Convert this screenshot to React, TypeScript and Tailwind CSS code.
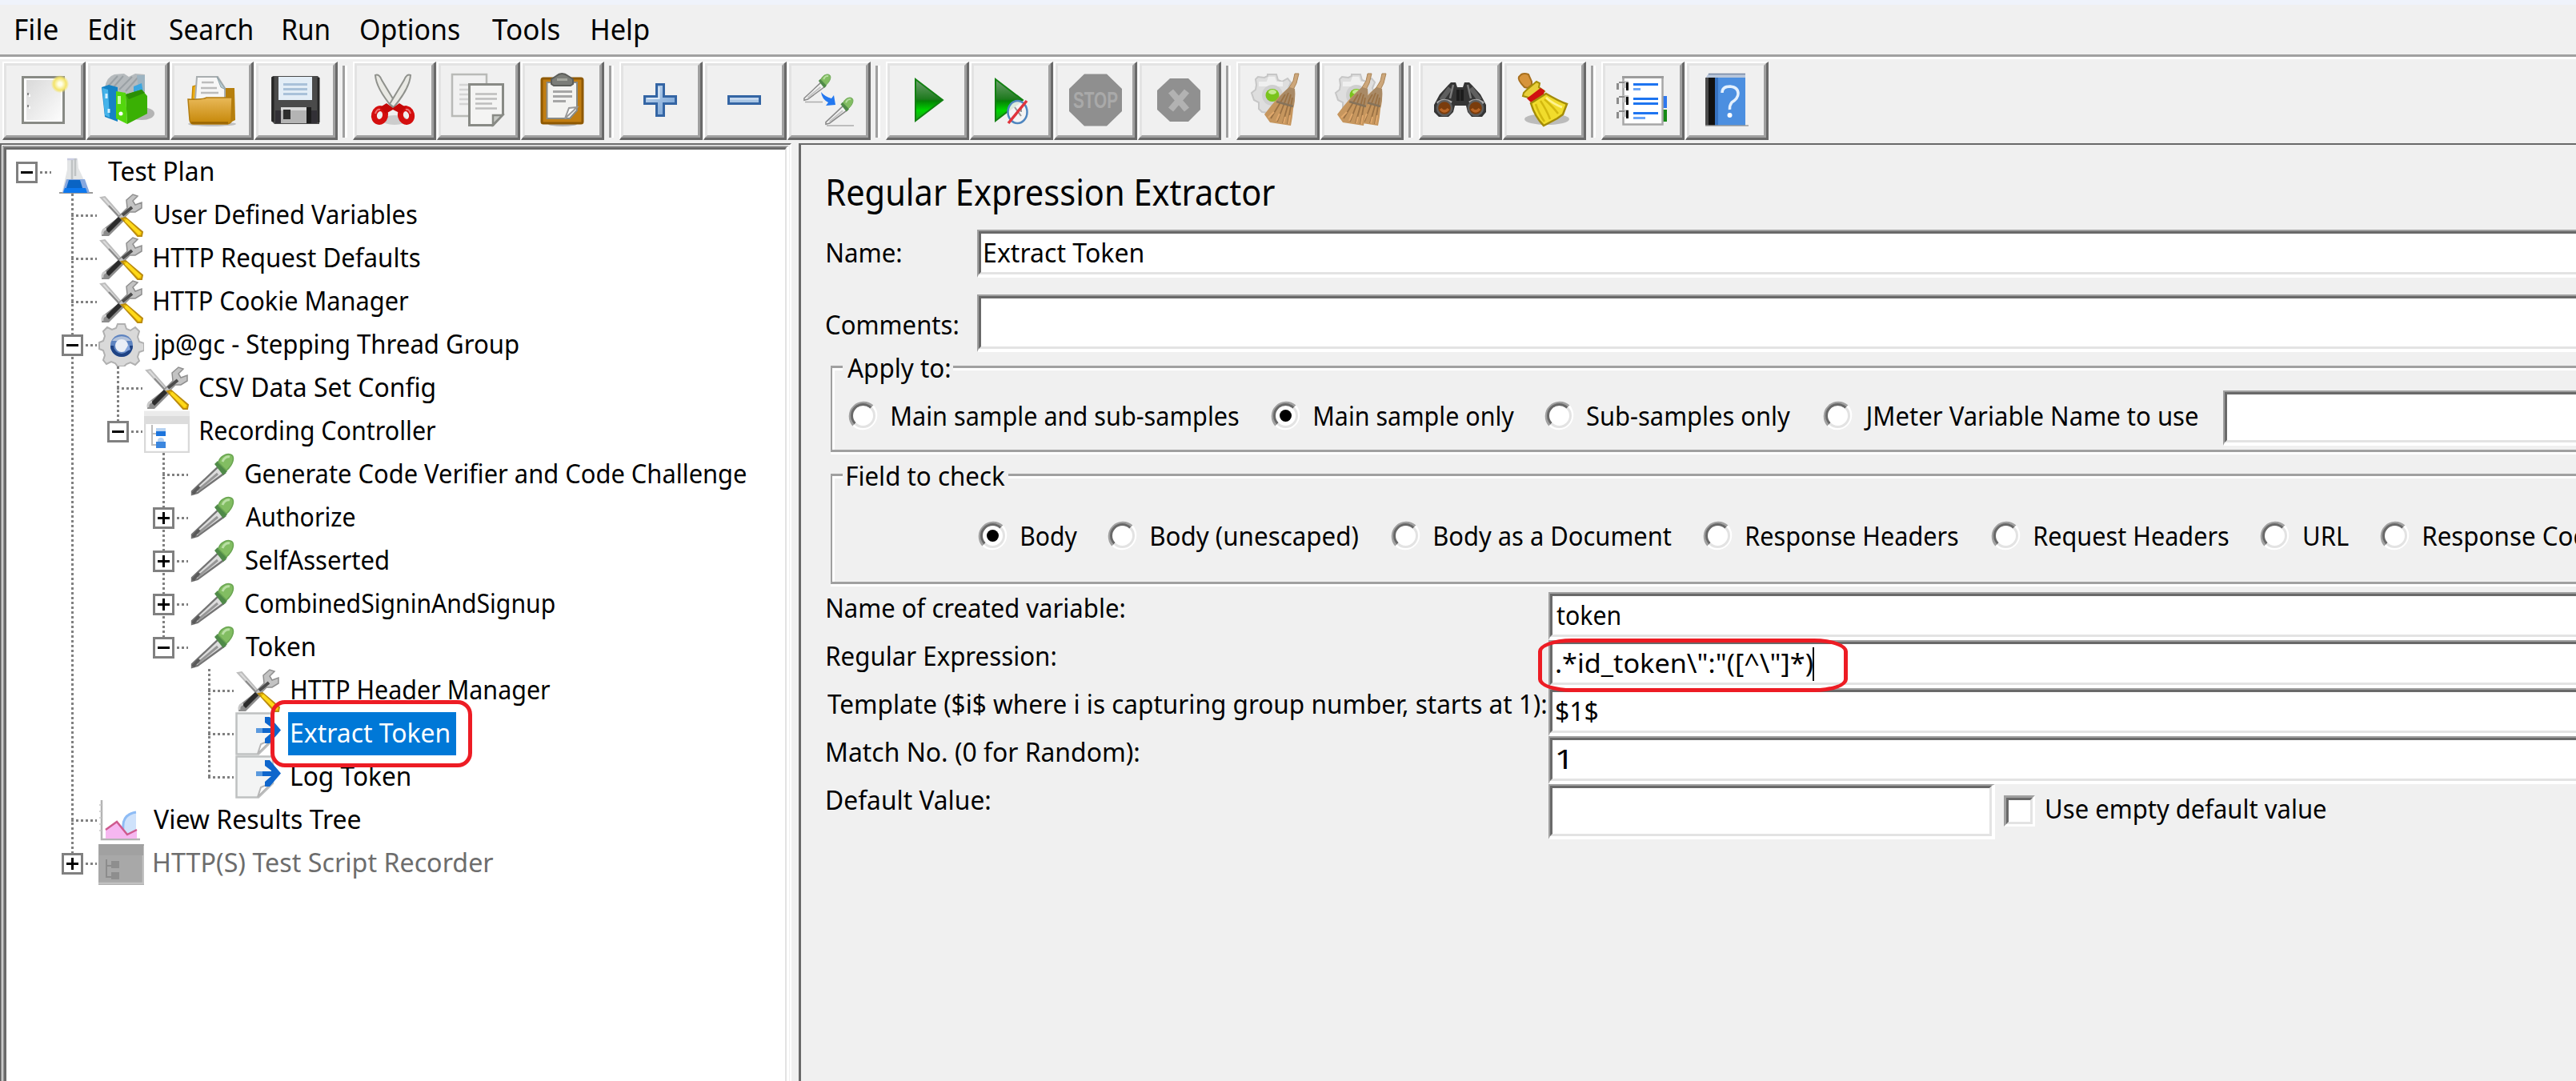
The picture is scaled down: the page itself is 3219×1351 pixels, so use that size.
import { useLayoutEffect, useState, type ReactNode } from "react";

const FAMILY = '"Noto Sans", "Open Sans", sans-serif';

/* One line of text whose inked glyphs fill exactly `w` pixels. */
function Fit({ t, w, size = 33, className = "" }: { t: string; w: number; size?: number; className?: string }) {
  const [m, setM] = useState({ s: 1, x: 0 });
  useLayoutEffect(() => {
    const ctx = document.createElement("canvas").getContext("2d");
    if (!ctx) return;
    ctx.font = `${size}px ${FAMILY}`;
    const b = ctx.measureText(t);
    const s = w / (b.actualBoundingBoxLeft + b.actualBoundingBoxRight);
    setM({ s, x: b.actualBoundingBoxLeft * s });
  }, [t, w, size]);
  return (
    <span className={`block shrink-0 whitespace-pre ${className}`} style={{ width: w, fontSize: size }}>
      <span className="inline-block origin-left" style={{ transform: `translateX(${m.x}px) scaleX(${m.s})` }}>
        {t}
      </span>
    </span>
  );
}

/* ---------- toolbar icons (66 x 66) ---------- */

function Dropper({ x = 0, y = 0, k = 1, dark = false }: { x?: number; y?: number; k?: number; dark?: boolean }) {
  return (
    <g transform={`translate(${x} ${y}) scale(${k})`}>
      <path d="M36 17 L44 25 L10 50 L3 52 L3 48 Z" fill={dark ? "#dcdcdc" : "#f4f4f4"} stroke={dark ? "#757575" : "#8a8a8a"} strokeWidth="2.4" />
      <path d="M35 26 L10 47" stroke={dark ? "#969696" : "#c4c4c4"} strokeWidth="3" />
      {dark && <path d="M12 42 L4 51" stroke="#5a5a5a" strokeWidth="4" />}
      <path d="M31 14 L35 10 L47 23 L42 28 Z" fill="#4f8a48" />
      <path d="M36 12 C37 5 46 0 51 2 C57 4 55 14 46 22 Z" fill="#82bd62" stroke="#6aa552" strokeWidth="1.5" />
      <path d="M41 11 C43 6 47 4 50 5" stroke="#b9dfa4" strokeWidth="3" fill="none" />
    </g>
  );
}

function Gear() {
  return (
    <g>
      <path
        d="M20 1 h11 l2 7 l5 2 l7 -4 l4 5 l-3 7 l2 5 l4 3 v9 l-6 3 l-3 6 l-8 5 l-14 0 l-8 -1 l-4 -4 l0 -8 l-6 -3 l-3 -9 l5 -4 l1 -6 l-1 -7 l3 -3 l8 1 l4 -2 Z"
        fill="#dedede"
        stroke="#c6c6c6"
        strokeWidth="2"
      />
      <path d="M21 4 h8 l3 8 h-14 Z M9 10 h30 v6 h-30 Z" fill="#efefef" />
      <circle cx="26" cy="27" r="13" fill="#cfcfcf" />
      <ellipse cx="26" cy="27" rx="8.500" ry="8" fill="#7ac41c" />
      <ellipse cx="26" cy="23" rx="5" ry="3" fill="#c3ea8e" />
    </g>
  );
}

function Straw({ x = 0 }: { x?: number }) {
  return (
    <g transform={`translate(${x} 0)`}>
      <path d="M54 0 H59 L56 12 L51 22 L46 19 L52 9 Z" fill="#cda77b" stroke="#a98355" strokeWidth="1" />
      <path d="M47 17 L54 19 Q55 34 52 44 Q51 56 49 65 L23 61 L16 51 Q24 40 34 29 Q41 22 47 17 Z" fill="#c6965e" />
      <path d="M47 17 L54 19 Q55 32 52 40 L31 34 Q41 22 47 17 Z" fill="#a98a66" />
      <path d="M42 26 L24 56 M46 24 L32 60 M49 26 L39 62 M51 30 L45 63" stroke="#9a7144" strokeWidth="1.8" />
      <path d="M31 35 L52 41" stroke="#86735a" strokeWidth="2.500" />
      <path d="M28 48 L21 55 M42 54 L40 62 M35 50 L31 59 M48 52 L46 63" stroke="#e0a86c" strokeWidth="2" />
    </g>
  );
}

const icons: Record<string, ReactNode> = {
  new: (
    <>
      <defs>
        <linearGradient id="doc" x1="0" y1="0" x2="1" y2="1">
          <stop offset="0" stopColor="#d9d9d9" />
          <stop offset="1" stopColor="#fcfcfc" />
        </linearGradient>
        <radialGradient id="glow">
          <stop offset="0.2" stopColor="#ffffe8" />
          <stop offset="0.7" stopColor="#f4e46a" />
          <stop offset="1" stopColor="#f4e46a" stopOpacity="0.1" />
        </radialGradient>
      </defs>
      <rect x="6.5" y="4.500" width="51" height="57" fill="#fff" stroke="#888a85" strokeWidth="3" />
      <rect x="11" y="8" width="43" height="50" fill="url(#doc)" />
      <path d="M13 24 v3 M13 39 v3" stroke="#8a8a8a" strokeWidth="2" />
      <path d="M15 26 v3 M15 41 v3" stroke="#fff" strokeWidth="2" />
      <circle cx="53" cy="13" r="11" fill="url(#glow)" />
    </>
  ),
  templates: (
    <>
      <ellipse cx="50" cy="50" rx="16" ry="8" fill="#000" opacity="0.25" />
      <path d="M4 18 Q6 4 16 1 L28 0 L34 4 L42 0 L54 1 L54 24 L30 30 Z" fill="#b5babd" />
      <path d="M8 16 L20 3 M14 18 L27 3 M22 20 L38 4 M30 22 L46 4" stroke="#9aa1a5" strokeWidth="2" />
      <path d="M44 2 h10 v20 h-8 Z" fill="#9db4c2" />
      <path d="M0 17 L9 14 L20 17 L20 60 L4 54 Z" fill="#1682c4" />
      <path d="M1 18 L8 20 L10 55 L4 52 Z" fill="#45b3ea" />
      <path d="M40 16 L50 12 L52 24 L40 26 Z" fill="#3aa6e0" />
      <path d="M18 22 L30 24 L32 63 L18 56 Z" fill="#53d70d" />
      <path d="M30 26 L50 20 L57 28 L57 50 L32 63 Z" fill="#3ab004" />
      <path d="M30 26 L50 20 L54 24 L34 32 Z" fill="#2b8f05" />
      <path d="M22 28 v10" stroke="#c8ffa0" strokeWidth="4" />
      <circle cx="24" cy="50" r="2.500" fill="#fff" />
      <path d="M6 25 v6 M9 44 v5" stroke="#d5f1ff" strokeWidth="3" />
    </>
  ),
  open: (
    <>
      <defs>
        <linearGradient id="fold" x1="0" y1="0" x2="0" y2="1">
          <stop offset="0" stopColor="#e9b959" />
          <stop offset="1" stopColor="#c58606" />
        </linearGradient>
      </defs>
      <ellipse cx="33" cy="63" rx="30" ry="3" fill="#000" opacity="0.2" />
      <path d="M8 32 L9 16 L16 14 L16 32 Z" fill="#f0b014" stroke="#c78a05" strokeWidth="1.500" />
      <path d="M48 18 L61 18 L62 58 L54 62 Z" fill="#b67f0d" />
      <path d="M14 4 L40 4 L49 18 L49 32 L12 32 Z" fill="#f7f7f7" stroke="#a9aeb0" strokeWidth="2" />
      <path d="M39 4 L50 20 L44 17 Z" fill="#b9cdd3" stroke="#8da0a6" strokeWidth="1" />
      <path d="M20 11 h15 M19 18 h20 M19 24 h22" stroke="#bcbcbc" strokeWidth="2.500" />
      <path d="M3 32 Q20 33 26 30 L58 30 L57 60 Q55 63 50 63 L10 63 Q6 63 5 58 Z" fill="url(#fold)" stroke="#b27c10" strokeWidth="1.500" />
      <path d="M7 61.500 h46" stroke="#9b6603" strokeWidth="2.500" />
    </>
  ),
  save: (
    <>
      <path d="M4 3 H60 L62 5 V63 H6 L2 59 V5 Z" fill="#4a4a4a" />
      <path d="M4 4 v56 M61 5 v56" stroke="#262626" strokeWidth="3" />
      <path d="M7 46 h52 v16 h-52 Z" fill="#323036" />
      <rect x="11" y="4" width="42" height="29" fill="#e3edf6" />
      <path d="M17 13.500 h30 M17 19.500 h30 M17 25.500 h30" stroke="#a9c1d9" strokeWidth="3" />
      <rect x="14" y="42" width="32" height="20" fill="#b4b4b4" />
      <rect x="14" y="42" width="32" height="4" fill="#d9d9d9" />
      <rect x="17" y="45" width="9" height="12" fill="#2e2e2e" />
      <rect x="46" y="42" width="6" height="20" fill="#1d1d1d" />
    </>
  ),
  cut: (
    <>
      <ellipse cx="33" cy="58" rx="16" ry="6" fill="#000" opacity="0.15" />
      <path d="M9 2 Q14 0 17 8 L35 38 L30 42 Q10 18 9 2 Z" fill="#e9e9e4" stroke="#8f918c" strokeWidth="2" />
      <path d="M53 2 Q48 0 45 8 L27 38 L32 42 Q52 18 53 2 Z" fill="#e9e9e4" stroke="#8f918c" strokeWidth="2" />
      <ellipse cx="14.500" cy="52" rx="7" ry="8.500" fill="none" stroke="#d40f0f" strokeWidth="7" transform="rotate(15 14.500 52)" />
      <ellipse cx="47.500" cy="52" rx="7" ry="8.500" fill="none" stroke="#d40f0f" strokeWidth="7" transform="rotate(-15 47.500 52)" />
      <path d="M15 42 L23 37 L31 43 L39 37 L47 42 L41 50 L31 45 L22 50 Z" fill="#c40808" />
      <path d="M9 50 q2 -6 6 -5 M53 50 q-2 -6 -6 -5" stroke="#f07070" strokeWidth="2" fill="none" />
    </>
  ),
  copy: (
    <>
      <rect x="0" y="1" width="43" height="52" fill="#f1f1f1" stroke="#b9bab7" strokeWidth="2.500" />
      <path d="M9 14 h18 M9 20 h14 M9 26 h14 M9 32 h14 M9 38 h14" stroke="#d4d4d4" strokeWidth="2.500" />
      <path d="M21.500 13.500 H63.500 V51 L51 64.500 H21.500 Z" fill="#f4f4f3" stroke="#888a85" strokeWidth="3" />
      <path d="M51 64 V52 H63 Z" fill="#c6c8c4" stroke="#888a85" strokeWidth="2.500" />
      <path d="M29 25.500 h27 M29 31.500 h27 M29 37.500 h21 M29 43.500 h27" stroke="#bdbdbd" strokeWidth="2.500" />
    </>
  ),
  paste: (
    <>
      <ellipse cx="33" cy="63" rx="18" ry="3" fill="#000" opacity="0.25" />
      <rect x="7" y="6" width="51" height="56" rx="2" fill="#c17d11" stroke="#8f5902" strokeWidth="3" />
      <path d="M13.500 11 H51 V46 L42 56 H13.500 Z" fill="#f3f3f1" stroke="#888a85" strokeWidth="2" />
      <path d="M36 56 L41 43 L51 42 Z" fill="#fff" stroke="#999" strokeWidth="2" />
      <path d="M21 22.500 h24 M21 28.500 h24 M21 34.500 h16" stroke="#a6a6a6" strokeWidth="3" />
      <path d="M25 3 Q32 -3 40 3 L46 7 V13 L43 15 H22 L19 13 V7 Z" fill="#7b7d78" stroke="#5c5e5a" strokeWidth="2" />
      <path d="M26 9 h13 v-3 h-13 Z" fill="#a5a79f" />
    </>
  ),
  plus: (
    <>
      <defs>
        <linearGradient id="blue" x1="0" y1="0" x2="1" y2="1">
          <stop offset="0" stopColor="#c6d9ef" />
          <stop offset="1" stopColor="#6f9dd2" />
        </linearGradient>
      </defs>
      <path d="M27.500 13.500 h9 v15 h15 v9 h-15 v15 h-9 v-15 h-15 v-9 h15 Z" fill="url(#blue)" stroke="#3465a4" strokeWidth="3" />
      <path d="M15.500 31 h15 v-14" stroke="#dbe8f6" strokeWidth="2" fill="none" />
    </>
  ),
  minus: (
    <>
      <rect x="12.500" y="28.500" width="39" height="9" fill="#a7c4e4" stroke="#3465a4" strokeWidth="3" />
      <path d="M14 31.500 h36" stroke="#c9dbf0" strokeWidth="2.500" />
    </>
  ),
  toggle: (
    <>
      <path d="M3 35.500 h22 M30 65 h34" stroke="#000" strokeWidth="1.500" opacity="0.28" />
      <Dropper x={0} y={0} k={0.64} />
      <Dropper x={27} y={29} k={0.66} />
      <path d="M23 23 Q24 32 32 36 L29 40 L41 39 L39 27 L36 31 Q28 29 23 23 Z" fill="#2378f0" />
    </>
  ),
  start: (
    <>
      <defs>
        <linearGradient id="play" x1="0" y1="0" x2="0" y2="1">
          <stop offset="0" stopColor="#6fa06f" />
          <stop offset="0.480" stopColor="#1d7a1d" />
          <stop offset="0.520" stopColor="#068006" />
          <stop offset="0.750" stopColor="#00d400" />
          <stop offset="1" stopColor="#1f9a1f" />
        </linearGradient>
      </defs>
      <path d="M18 7 L52 33 L18 59 Z" fill="url(#play)" stroke="#128012" strokeWidth="2" />
    </>
  ),
  startNoPause: (
    <>
      <path d="M13 7 L47 33 L13 59 Z" fill="url(#play)" stroke="#128012" strokeWidth="2" />
      <ellipse cx="40.500" cy="48" rx="12" ry="14" fill="#f4f4f4" fillOpacity="0.9" stroke="#4f86bf" strokeWidth="2.500" />
      <path d="M37 42 l8 11 M45 44 v4" stroke="#999" strokeWidth="2" />
      <path d="M29 62 L52 34" stroke="#e0343c" strokeWidth="3.500" />
    </>
  ),
  stop: (
    <>
      <path d="M19 0.500 H47 L66 19 V47 L47 65.500 H19 L0 47 V19 Z" fill="#8f8f8f" />
      <text x="5" y="43" fontSize="29" fontWeight="700" fontFamily="Liberation Sans, sans-serif" fill="#a9a9a9" textLength="56" lengthAdjust="spacingAndGlyphs">
        STOP
      </text>
    </>
  ),
  shutdown: (
    <>
      <path d="M21 6 H44 L59 21 V45 L44 60 H21 L5 45 V21 Z" fill="#909090" />
      <path d="M22 22 L42 45 M42 22 L22 45" stroke="#b2b2b2" strokeWidth="8" />
    </>
  ),
  clear: (
    <>
      <Gear />
      <Straw />
    </>
  ),
  clearAll: (
    <>
      <Gear />
      <Straw x={4} />
      <Straw x={-14} />
    </>
  ),
  search: (
    <>
      <path d="M18 14 L21 11 H27 L29 17 H36 L38 11 H44 L48 15 L58 26 L65 39 V48 L60 54 H47 L42 48 L40 40 H26 L24 48 L18 54 H6 L0 48 V39 L7 26 Z" fill="#353535" />
      <path d="M20 18 L9 33 M46 18 L57 33" stroke="#5f5f5f" strokeWidth="6" />
      <path d="M24 14 L20 31 M42 14 L46 31" stroke="#7c7c7c" strokeWidth="2.500" />
      <path d="M4 37 Q12 30 22 36 M44 36 Q53 30 62 37" stroke="#a8a8a8" strokeWidth="3" fill="none" />
      <circle cx="13" cy="43" r="9" fill="#7a3c0c" stroke="#5c5c5c" strokeWidth="2.500" />
      <circle cx="52" cy="43" r="9" fill="#7a3c0c" stroke="#5c5c5c" strokeWidth="2.500" />
      <path d="M8 44 q5 6 10 0 M47 44 q5 6 10 0" stroke="#b86424" strokeWidth="3.500" fill="none" />
      <path d="M30 20 v14 M35 20 v14" stroke="#1c1c1c" strokeWidth="4" />
    </>
  ),
  broom: (
    <>
      <ellipse cx="36" cy="57" rx="28" ry="7" fill="#000" opacity="0.22" />
      <path d="M4 1 Q8 -1 13 1 L17 10 L17 14 L12 18 L8 17 Q-1 8 1 4 Z" fill="#d6943c" stroke="#a8701e" strokeWidth="2" />
      <path d="M10 21 L23 10 L27 12 L26 17 L33 22 L18 36 L13 30 L6 28 L7 24 Z" fill="#e8cf3a" stroke="#a48c08" strokeWidth="2" />
      <path d="M11 31 L28 18 L33 21 L32 26 L16 36 Z" fill="#d01010" />
      <path d="M16 37 L35 25 Q50 34 61 38 L56 51 L49 56 L32 65 Q21 54 16 37 Z" fill="#f1dc2c" stroke="#a48c08" strokeWidth="2.500" />
      <path d="M22 38 Q26 50 33 60 M28 34 Q36 46 40 57 M33 32 Q44 42 50 50" stroke="#d3b90f" strokeWidth="2.500" fill="none" />
      <path d="M35 30 Q44 38 55 42" stroke="#fff38f" strokeWidth="3" fill="none" />
    </>
  ),
  functions: (
    <>
      <rect x="57" y="28" width="6" height="15" fill="#2e78ee" />
      <rect x="57" y="45" width="6" height="15" fill="#158a15" />
      <rect x="8.500" y="4.500" width="49" height="59" fill="#fff" stroke="#a7a7a7" strokeWidth="2.500" />
      <path d="M7 4.500 h52" stroke="#9c9c9c" strokeWidth="3" />
      <path d="M21 13.500 h31 M21 31.500 h31 M21 37.500 h31 M21 49.500 h31" stroke="#1e74f0" strokeWidth="3" />
      <path d="M21 19.500 h9 M21 55.500 h15" stroke="#6aa5f7" strokeWidth="3" />
      <path d="M8 9 h7 v9 h-7 Z M8 27 h7 v9 h-7 Z M8 45 h7 v9 h-7 Z" fill="#c4c4c4" />
      <path d="M13.500 11 v10 M13.500 29 v10 M13.500 46 v10" stroke="#000" strokeWidth="3" />
      <path d="M1.500 12 v8 M1.500 30 v8 M1.500 48 v8" stroke="#8c8c8c" strokeWidth="3" />
      <path d="M3 11 h7 M3 29 h7 M3 47 h7" stroke="#8c8c8c" strokeWidth="2" />
    </>
  ),
  help: (
    <>
      <path d="M10 0 H56 V6 H6 Z" fill="#b8c6da" />
      <path d="M10 0.500 H56" stroke="#7588a3" strokeWidth="1.500" />
      <rect x="6" y="5" width="13" height="60" fill="#111" />
      <rect x="6" y="5" width="4" height="60" fill="#4a4a4a" />
      <rect x="18" y="5" width="38" height="60" fill="#4c8fe0" />
      <rect x="18" y="5" width="4" height="60" fill="#3672c0" />
      <path d="M6 65 h54" stroke="#999" strokeWidth="2" opacity="0.7" />
      <path d="M27 24 Q27 16 37 16 Q47 17 47 25 Q47 31 39 36 Q36 40 36.500 45" fill="none" stroke="#e4f0fd" strokeWidth="3.500" />
      <circle cx="36.500" cy="52" r="3" fill="#fff" />
    </>
  ),
};

function ToolButton({ name }: { name: string }) {
  return (
    <button className="h-[98px] w-[104px] shrink-0 border-t-2 border-r-3 border-b-3 border-l-2 border-t-white border-r-[#696969] border-b-[#696969] border-l-white">
      <span className="flex h-full w-full justify-center border-t-3 border-r-3 border-b-3 border-l-3 border-t-[#e3e3e3] border-r-[#a0a0a0] border-b-[#a0a0a0] border-l-[#e3e3e3] pt-[10px]">
        <svg className="ml-px h-[66px] w-[66px] shrink-0 overflow-visible" viewBox="0 0 66 66">
          {icons[name]}
        </svg>
      </span>
    </button>
  );
}

const toolGroups = [
  ["new", "templates", "open", "save"],
  ["cut", "copy", "paste"],
  ["plus", "minus", "toggle"],
  ["start", "startNoPause", "stop", "shutdown"],
  ["clear", "clearAll"],
  ["search", "broom"],
  ["functions", "help"],
];

function Toolbar() {
  return (
    <div className="flex h-[105px] pt-[3px] pl-[3px]">
      {toolGroups.map((g, i) => (
        <div key={i} className="flex shrink-0">
          {i > 0 && (
            <div className="mt-[5px] mr-[7px] ml-[6px] h-[90px] w-[6px] border-r-3 border-l-3 border-r-white border-l-[#a0a0a0]" />
          )}
          <div className="flex gap-px">
            {g.map((n) => (
              <ToolButton key={n} name={n} />
            ))}
          </div>
        </div>
      ))}
    </div>
  );
}

/* ---------- tree icons (57 x 54) ---------- */

const treeIcons: Record<string, ReactNode> = {
  flask: (
    <>
      <path d="M8 53 h42" stroke="#9a9a9a" strokeWidth="2" />
      <path d="M18 10 h13 L35 0 L31 10 L32 22 L45 50 L44 53 H13 L12 50 L18 24 Z" fill="#e3e5e6" />
      <path d="M18 11 h12" stroke="#c9cce0" strokeWidth="2.500" />
      <path d="M24 12 v26 M28 10 v22" stroke="#bfc3c4" strokeWidth="2.500" />
      <path d="M17 36 L40 36 L46 53 H12 Z" fill="#86a8e0" />
      <path d="M20 37 h14 l5 16 h-24 Z" fill="#0a64c4" />
      <path d="M15 47 h26 l2 6 h-30 Z" fill="#0d78ee" />
    </>
  ),
  tools: (
    <>
      <path d="M3 5 L8 4 L29 28 L27 31 Z" fill="#dcdcdc" stroke="#bdbdbd" strokeWidth="2" />
      <path d="M13 15 L27 30" stroke="#8a8a8a" strokeWidth="2" />
      <path d="M36 18 L35 8 L43 1 L49 3 L43 9 L46 14 L54 11 L54 18 L46 23 L39 23 L29 33 L25 29 Z" fill="#c3c3c3" stroke="#8f8f8f" strokeWidth="1.500" />
      <path d="M30 27 L42 17" stroke="#4c4c4c" strokeWidth="4" />
      <path d="M24 30 L32 34 L13 53 L4 53 L5 45 Z" fill="#8c8c8c" />
      <path d="M27 31 L11 47" stroke="#2c2c2c" strokeWidth="6" />
      <path d="M5 51 q-1 -6 5 -7" stroke="#c9c9c9" strokeWidth="3" fill="none" />
      <path d="M29 31 L34 30 L55 48 L54 53 L49 53 Z" fill="#f2c400" stroke="#bb8c10" strokeWidth="2" />
      <path d="M34 33 L52 50" stroke="#ffd91a" strokeWidth="4" />
    </>
  ),
  gear: (
    <>
      <path
        d="M24 1 h9 l2 6 l5 2 l6 -4 l5 5 l-2 7 l2 6 l6 2 v9 l-6 2 l-2 6 l2 5 l-5 5 l-6 -3 l-5 2 l-3 3 h-8 l-3 -4 l-5 -2 l-6 3 l-4 -5 l2 -6 l-2 -6 l-5 -2 v-8 l5 -2 l2 -6 l-2 -6 l5 -5 l6 3 l5 -2 Z"
        fill="#d9d9d9"
        stroke="#b0b0b0"
        strokeWidth="2"
      />
      <circle cx="29" cy="28" r="14" fill="#5d83c0" />
      <path d="M15 28 a14 14 0 0 0 28 0 l-4 0 a10 10 0 0 1 -20 0 Z" fill="#1f4384" />
      <path d="M17 22 a14 12 0 0 1 24 0 Z" fill="#b3c2da" />
      <circle cx="29" cy="28" r="8" fill="#ebeff6" />
      <path d="M32 36 L38 26 L40 33 Z" fill="#86a6dc" />
    </>
  ),
  controller: (
    <>
      <rect x="1" y="3" width="55" height="50" fill="#fff" stroke="#d9d9d9" strokeWidth="2.500" />
      <rect x="0" y="2" width="57" height="16" fill="#dcdcdc" />
      <rect x="0" y="2" width="57" height="6" fill="#ebebeb" />
      <path d="M10 19 V44 H16 M10 30 H16" stroke="#bcbcbc" strokeWidth="2" fill="none" />
      <rect x="15" y="23" width="12" height="10" fill="#b8d3f2" />
      <rect x="15" y="27" width="12" height="6" fill="#1c74dc" />
      <circle cx="21" cy="39" r="4" fill="#b8d3f2" />
      <rect x="15" y="40" width="12" height="8" fill="#3b86de" />
    </>
  ),
  sampler: <Dropper dark />,
  extractor: (
    <>
      <path d="M1.500 1.500 H47 V35 L29 52.500 H1.500 Z" fill="#f3f4f4" stroke="#bfc1c1" strokeWidth="2.500" />
      <path d="M28 52 L32 40 L46 34 Z" fill="#fff" stroke="#b6b6b6" strokeWidth="2" />
      <path d="M26 23 H50" stroke="#5b9ade" strokeWidth="6" />
      <path d="M37 6 L43 6 L57 22.500 L43 39 L37 39 L37 33 L45 26 V19 L37 13 Z" fill="#0f66cc" />
      <path d="M34 23 H52" stroke="#0f66cc" strokeWidth="6" />
    </>
  ),
  results: (
    <>
      <path d="M4 2 V51 H52" stroke="#b3b3b3" strokeWidth="2.500" fill="none" />
      <path d="M1 8 h3 M1 16 h3 M1 24 h3 M1 32 h3 M1 40 h3" stroke="#c6c6c6" strokeWidth="1.500" />
      <path d="M30 44 Q28 20 47 16 V50 H32 Z" fill="#cfe2fb" />
      <path d="M31 38 Q29 20 47 17" stroke="#8ebcf5" strokeWidth="3" fill="none" />
      <path d="M9 50 V39 L24 29 L37 45 L48 39 V50 Z" fill="#f6b7f0" />
      <path d="M9 39 L23 29 L36 45 L48 39" stroke="#cf5a8e" strokeWidth="2.500" fill="none" />
    </>
  ),
  recorder: (
    <>
      <rect x="0" y="3" width="57" height="51" fill="#a8a8a8" />
      <path d="M0 52 H57 M56 5 V52" stroke="#c2c2c2" strokeWidth="2.500" />
      <rect x="1" y="3" width="55" height="14" fill="#a1a1a1" />
      <path d="M10 22 V44 H16 M10 30 H16" stroke="#8c8c8c" strokeWidth="2" fill="none" />
      <rect x="16" y="24" width="10" height="9" fill="#8e8e8e" />
      <rect x="16" y="38" width="10" height="9" fill="#8e8e8e" />
    </>
  ),
};

type Node = {
  t: string;
  w: number;
  level: number;
  icon: string;
  pad?: string;
  box?: "+" | "-";
  last?: boolean;
  selected?: boolean;
  muted?: boolean;
};

const nodes: Node[] = [
  { t: "Test Plan", w: 131, level: 0, icon: "flask", box: "-", pad: "pl-[3px]" },
  { t: "User Defined Variables", w: 328, level: 1, icon: "tools" },
  { t: "HTTP Request Defaults", w: 332, level: 1, icon: "tools" },
  { t: "HTTP Cookie Manager", w: 318, level: 1, icon: "tools" },
  { t: "jp@gc - Stepping Thread Group", w: 458, level: 1, icon: "gear", box: "-", pad: "pl-px" },
  { t: "CSV Data Set Config", w: 293, level: 2, icon: "tools" },
  { t: "Recording Controller", w: 294, level: 2, icon: "controller", box: "-", last: true, pad: "pl-[5px]" },
  { t: "Generate Code Verifier and Code Challenge", w: 625, level: 3, icon: "sampler" },
  { t: "Authorize", w: 136, level: 3, icon: "sampler", box: "+" },
  { t: "SelfAsserted", w: 178, level: 3, icon: "sampler", box: "+" },
  { t: "CombinedSigninAndSignup", w: 386, level: 3, icon: "sampler", box: "+" },
  { t: "Token", w: 86, level: 3, icon: "sampler", box: "-", last: true },
  { t: "HTTP Header Manager", w: 323, level: 4, icon: "tools", pad: "pl-[5px]" },
  { t: "Extract Token", w: 196, level: 4, icon: "extractor", selected: true, pad: "pl-[5px]" },
  { t: "Log Token", w: 147, level: 4, icon: "extractor", last: true, pad: "pl-[5px]" },
  { t: "View Results Tree", w: 258, level: 1, icon: "results", pad: "pl-[3px]" },
  { t: "HTTP(S) Test Script Recorder", w: 424, level: 1, icon: "recorder", box: "+", last: true, muted: true },
];

const DOTS_Y = "bg-[repeating-linear-gradient(180deg,#808080_0_3px,transparent_3px_6px)]";
const DOTS_X = "bg-[repeating-linear-gradient(90deg,#808080_0_3px,transparent_3px_6px)]";

function TreeRow({ n }: { n: Node }) {
  const cells = Array.from({ length: n.level + 1 }, (_, i) => i);
  return (
    <div className="flex h-[54px] shrink-0 items-start">
      {cells.map((i) => {
        const own = i === n.level;
        const line = (i === 1 && !own) || (own && i > 0);
        return (
          <div key={i} className="relative h-[54px] w-[57px] shrink-0">
            {line && (
              <div className={`absolute top-0 left-[24px] w-[3px] ${own && n.last ? "h-[28px]" : "h-[54px]"} ${DOTS_Y}`} />
            )}
            {own && <div className={`absolute top-[26px] left-[24px] h-[3px] w-[32px] ${DOTS_X}`} />}
            {own && n.box && (
              <div className="absolute top-[14px] left-[12px] h-[27px] w-[27px] border-3 border-[#808080] bg-white">
                <div className="absolute top-[9px] left-[3px] h-[3px] w-[15px] bg-black" />
                {n.box === "+" && <div className="absolute top-[3px] left-[9px] h-[15px] w-[3px] bg-black" />}
              </div>
            )}
          </div>
        );
      })}
      <svg className="ml-px h-[54px] w-[57px] shrink-0" viewBox="0 0 57 54">
        {treeIcons[n.icon]}
      </svg>
      <div
        className={`ml-[9px] h-[54px] pr-[9px] leading-[52px] ${n.pad ?? "pl-[4px]"} ${n.selected ? "bg-[#0078d7] text-white" : n.muted ? "text-[#6d6d6d]" : "text-black"}`}
      >
        <Fit t={n.t} w={n.w} />
      </div>
    </div>
  );
}

/* ---------- form controls ---------- */

function Field({ t, w, className, caret = false }: { t?: string; w?: number; className: string; caret?: boolean }) {
  return (
    <div className={`border-t-2 border-r-4 border-b-4 border-l-2 border-t-[#a0a0a0] border-r-white border-b-white border-l-[#a0a0a0] ${className}`}>
      <div className="flex h-full border-t-3 border-r-3 border-b-3 border-l-3 border-t-[#696969] border-r-[#e3e3e3] border-b-[#e3e3e3] border-l-[#696969] bg-white pl-[5px] leading-[48px]">
        {t && w && <Fit t={t} w={w} />}
        {caret && <div className="mt-[4px] h-[42px] w-[2px] bg-black" />}
      </div>
    </div>
  );
}

function Radio({ t, w, checked = false, className, gap = "ml-[18px]" }: { t: string; w: number; checked?: boolean; className: string; gap?: string }) {
  return (
    <div className={`flex shrink-0 items-start ${className}`}>
      <svg className="mt-[13px] h-[37px] w-[37px] shrink-0" viewBox="0 0 37 37">
        <circle cx="18.500" cy="18.500" r="17" fill="#fff" />
        <path d="M6.500 30.500 A17 17 0 0 1 30.500 6.500" fill="none" stroke="#a0a0a0" strokeWidth="3" />
        <path d="M30.500 6.500 A17 17 0 0 1 6.500 30.500" fill="none" stroke="#fff" strokeWidth="3" />
        <path d="M8.600 28.400 A14 14 0 0 1 28.400 8.600" fill="none" stroke="#696969" strokeWidth="3" />
        <path d="M28.400 8.600 A14 14 0 0 1 8.600 28.400" fill="none" stroke="#e3e3e3" strokeWidth="3" />
        {checked && <circle cx="18.500" cy="18.500" r="7.500" fill="#000" />}
      </svg>
      <Fit t={t} w={w} className={`leading-[64px] ${gap}`} />
    </div>
  );
}

function Group({ title, w, className, children }: { title: string; w: number; className: string; children: ReactNode }) {
  return (
    <div className={`ml-[37px] shrink-0 border-b-3 border-white ${className}`}>
      <div className="h-full border-t-3 border-b-3 border-l-2 border-[#a0a0a0]">
        <div className="flex h-full flex-col items-start border-t-3 border-l-3 border-white">
          <div className="-mt-[23px] ml-[10px] h-[40px] shrink-0 bg-[#f0f0f0] pr-[4px] pl-[6px] leading-[40px]">
            <Fit t={title} w={w} />
          </div>
          {children}
        </div>
      </div>
    </div>
  );
}

function FormRow({ label, w, className = "h-[60px]", children }: { label: string; w: number; className?: string; children: ReactNode }) {
  return (
    <div className={`flex shrink-0 pl-[33px] ${className}`}>
      <div className="w-[901px] shrink-0 leading-[40px]">
        <Fit t={label} w={w} />
      </div>
      {children}
    </div>
  );
}

const menu = [
  { t: "File", w: 52, c: "w-[92px]" },
  { t: "Edit", w: 58, c: "w-[100px]" },
  { t: "Search", w: 103, c: "w-[142px]" },
  { t: "Run", w: 57, c: "w-[97px]" },
  { t: "Options", w: 123, c: "w-[164px]" },
  { t: "Tools", w: 84, c: "w-[125px]" },
  { t: "Help", w: 71, c: "w-[110px]" },
];

export default function App() {
  return (
    <div className="relative flex h-[1351px] w-[3219px] flex-col overflow-hidden bg-[#f0f0f0] font-['Noto_Sans','Open_Sans',sans-serif] text-black">
      <div className="h-[6px] shrink-0 bg-[#eff3fb]" />
      <div className="flex h-[62px] shrink-0 pl-[20px] leading-[61px]">
        {menu.map((m) => (
          <div key={m.t} className={`shrink-0 ${m.c}`}>
            <Fit t={m.t} w={m.w} size={36} />
          </div>
        ))}
      </div>
      <div className="h-[3px] shrink-0 bg-[#a0a0a0]" />
      <div className="h-[3px] shrink-0 bg-white" />
      <Toolbar />

      <div className="flex min-h-0 flex-1">
        {/* test plan tree */}
        <div className="w-[989px] shrink-0 border-t-2 border-r-2 border-l-2 border-t-[#696969] border-r-white border-l-[#696969]">
          <div className="h-full border-t border-r border-l border-t-white border-r-[#f0f0f0] border-l-white">
            <div className="h-full border-t-2 border-r-3 border-l-2 border-t-[#a0a0a0] border-r-white border-l-[#a0a0a0]">
              <div className="flex h-full flex-col border-t-3 border-r-2 border-l-3 border-t-[#696969] border-r-[#e3e3e3] border-l-[#696969] bg-white pt-px">
                {nodes.map((n) => (
                  <TreeRow key={n.t} n={n} />
                ))}
              </div>
            </div>
          </div>
        </div>

        {/* element editor */}
        <div className="ml-[9px] flex min-w-0 flex-1 flex-col border-t-2 border-l-3 border-[#696969]">
          <div className="mt-[29px] h-[60px] shrink-0 pl-[34px] leading-[60px]">
            <Fit t="Regular Expression Extractor" w={558} size={45} />
          </div>
          <div className="mt-[17px] flex h-[60px] shrink-0 pl-[33px] leading-[58px]">
            <div className="w-[187px] shrink-0">
              <Fit t="Name:" w={92} />
            </div>
            <Field className="h-[60px] w-[2200px] shrink-0" t="Extract Token" w={197} />
          </div>
          <div className="mt-[21px] flex h-[72px] shrink-0 pl-[32px] leading-[76px]">
            <div className="w-[188px] shrink-0">
              <Fit t="Comments:" w={164} />
            </div>
            <Field className="h-[72px] w-[2200px] shrink-0" />
          </div>

          <Group title="Apply to:" w={128} className="mt-[17px] h-[111px]">
            <div className="mt-[8px] flex h-[69px] shrink-0 pl-[17px]">
              <Radio t="Main sample and sub-samples" w={433} className="w-[528px]" />
              <Radio t="Main sample only" w={249} checked className="w-[342px]" />
              <Radio t="Sub-samples only" w={254} gap="ml-[16px]" className="w-[348px]" />
              <Radio t="JMeter Variable Name to use" w={417} gap="ml-[14px]" className="w-[500px]" />
              <Field className="h-[69px] w-[600px] shrink-0" />
            </div>
          </Group>

          <Group title="Field to check" w={197} className="mt-[24px] h-[141px]">
            <div className="mt-[23px] flex h-[69px] shrink-0 pl-[179px]">
              <Radio t="Body" w={69} checked className="w-[162px]" />
              <Radio t="Body (unescaped)" w={258} className="w-[354px]" />
              <Radio t="Body as a Document" w={296} className="w-[390px]" />
              <Radio t="Response Headers" w={264} className="w-[360px]" />
              <Radio t="Request Headers" w={242} className="w-[336px]" />
              <Radio t="URL" w={56} className="w-[150px]" />
              <Radio t="Response Code" w={222} className="w-[300px]" />
            </div>
          </Group>

          <div className="h-[7px] shrink-0" />
          <FormRow label="Name of created variable:" w={371}>
            <Field className="h-[60px] w-[1400px] shrink-0" t="token" w={79} />
          </FormRow>
          <FormRow label="Regular Expression:" w={285}>
            <Field className="h-[60px] w-[1400px] shrink-0" t={'.*id_token\\":"([^\\"]*)'} w={320} caret />
          </FormRow>
          <FormRow label="Template ($i$ where i is capturing group number, starts at 1):" w={898}>
            <Field className="h-[60px] w-[1400px] shrink-0" t="$1$" w={52} />
          </FormRow>
          <FormRow label="Match No. (0 for Random):" w={389}>
            <Field className="h-[60px] w-[1400px] shrink-0" t="1" w={13} />
          </FormRow>
          <FormRow label="Default Value:" w={203} className="h-[69px]">
            <Field className="h-[69px] w-[558px] shrink-0" />
            <div className="mt-[14px] ml-[11px] h-[39px] w-[39px] shrink-0 border-3 border-t-[#a0a0a0] border-r-white border-b-white border-l-[#a0a0a0]">
              <div className="h-full border-3 border-t-[#696969] border-r-[#e3e3e3] border-b-[#e3e3e3] border-l-[#696969] bg-white" />
            </div>
            <Fit t="Use empty default value" w={349} className="ml-[14px] leading-[62px]" />
          </FormRow>
        </div>
      </div>

      {/* highlight marks */}
      <div className="absolute top-[875px] left-[338px] h-[84px] w-[252px] rounded-[18px] border-5 border-[#ed1c24]" />
      <div className="absolute top-[798px] left-[1922px] h-[67px] w-[387px] rounded-[42px/16px] border-5 border-[#ed1c24]" />
    </div>
  );
}
